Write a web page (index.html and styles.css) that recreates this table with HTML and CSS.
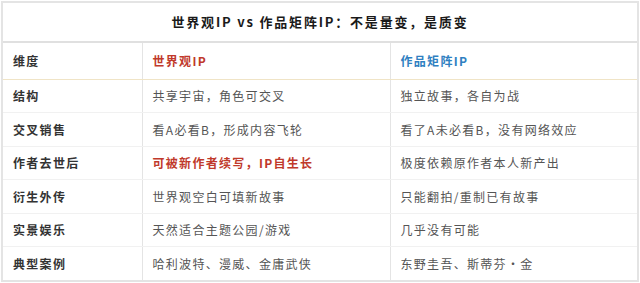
FILE: index.html
```html
<!DOCTYPE html>
<html lang="zh">
<head>
<meta charset="utf-8">
<link rel="stylesheet" href="styles.css">
</head>
<body>
<div class="frame">
  <div class="title">世界观IP vs 作品矩阵IP：不是量变，是质变</div>
  <table class="cmp">
    <colgroup>
      <col class="c1"><col class="c2"><col class="c3">
    </colgroup>
    <thead>
      <tr>
        <th class="dim">维度</th>
        <th class="red">世界观IP</th>
        <th class="blue">作品矩阵IP</th>
      </tr>
    </thead>
    <tbody>
      <tr><td class="dim">结构</td><td>共享宇宙，角色可交叉</td><td>独立故事，各自为战</td></tr>
      <tr><td class="dim">交叉销售</td><td>看A必看B，形成内容飞轮</td><td>看了A未必看B，没有网络效应</td></tr>
      <tr><td class="dim">作者去世后</td><td class="hl">可被新作者续写，IP自生长</td><td>极度依赖原作者本人新产出</td></tr>
      <tr><td class="dim">衍生外传</td><td>世界观空白可填新故事</td><td>只能翻拍/重制已有故事</td></tr>
      <tr><td class="dim">实景娱乐</td><td>天然适合主题公园/游戏</td><td>几乎没有可能</td></tr>
      <tr><td class="dim">典型案例</td><td>哈利波特、漫威、金庸武侠</td><td>东野圭吾、斯蒂芬·金</td></tr>
    </tbody>
  </table>
</div>
</body>
</html>
```
FILE: styles.css
```css
html, body {
  margin: 0;
  padding: 0;
  background: #fff;
}
body {
  padding: 1px;
  font-family: "Noto Sans CJK SC", "Noto Sans", sans-serif;
}
.frame {
  border: 2px solid #e4e4e4;
  background: #fff;
}
.title {
  height: 38px;
  line-height: 38px;
  text-align: center;
  font-size: 13px;
  font-weight: 700;
  letter-spacing: 1.8px;
  color: #1a1a1a;
  border-bottom: 2px solid #e0e0e0;
}
.cmp {
  width: 100%;
  border-collapse: collapse;
  table-layout: fixed;
  font-size: 12px;
  letter-spacing: 1.3px;
}
.c1 { width: 139px; }
.c2 { width: 248px; }
.cmp th, .cmp td {
  text-align: left;
  padding: 0 0 0 10px;
  border-left: 1px solid #e4e4e4;
  border-bottom: 1px solid #f1f1f1;
  color: #555;
  font-weight: 400;
  white-space: nowrap;
}
.cmp th:first-child, .cmp td:first-child {
  border-left: none;
}
.cmp thead tr { height: 36px; }
.cmp thead th {
  border-bottom: 1px solid #f0e4c6;
  font-weight: 700;
}
.cmp tbody tr { height: 33.5px; }
.cmp tbody tr:last-child td { border-bottom: none; }
.cmp .dim {
  color: #333;
  font-weight: 700;
}
.cmp .red {
  color: #c0392b;
}
.cmp .blue {
  color: #2f7fc1;
}
.cmp .hl {
  color: #c0392b;
  font-weight: 700;
}
```
